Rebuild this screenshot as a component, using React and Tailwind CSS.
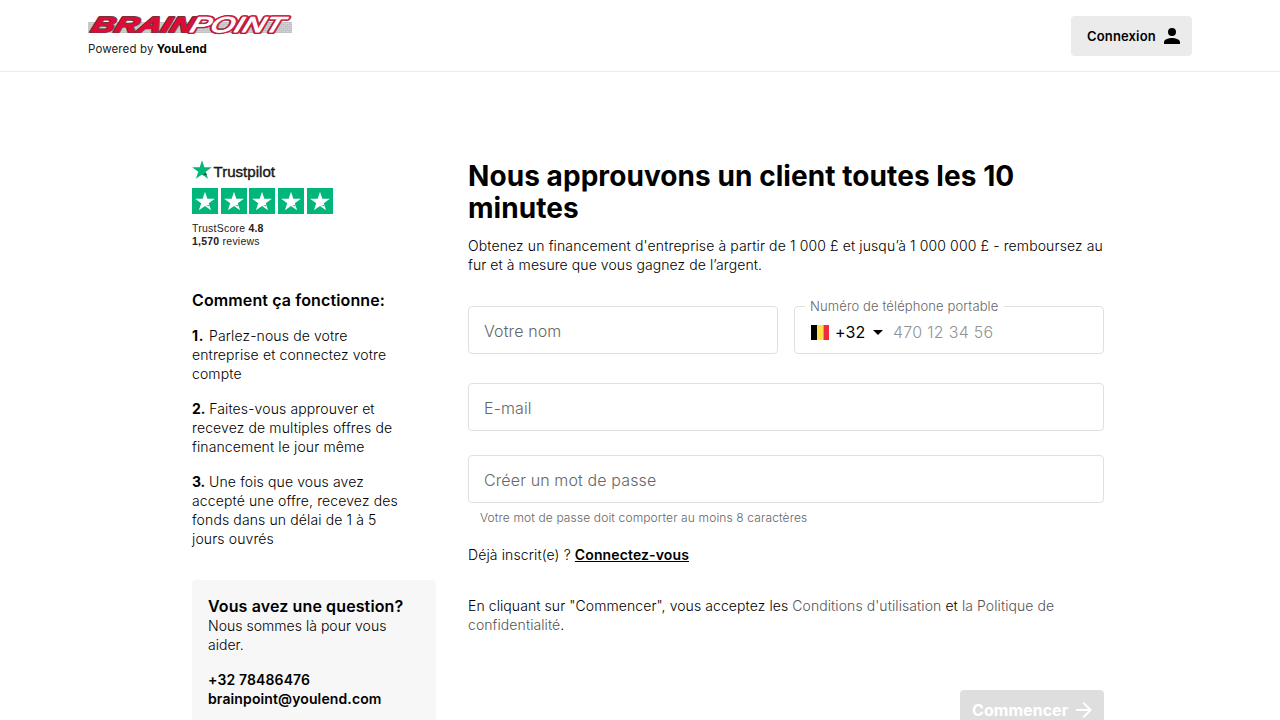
const STAR = "M12 1.2l2.55 7.85h8.25l-6.67 4.85 2.55 7.85L12 16.9l-6.68 4.85 2.55-7.85L1.2 9.05h8.25z";

function BrandLogo() {
  return (
    <svg width="204" height="22" viewBox="0 0 204 22" className="block overflow-visible">
      <defs>
        <pattern id="bricks" width="4" height="4" patternUnits="userSpaceOnUse">
          <rect width="4" height="4" fill="#d2d2d2" />
          <path d="M0 .5h4M1.500 0v2M3.500 2v2M0 2.500h4" stroke="#bababa" strokeWidth=".6" />
        </pattern>
      </defs>
      <rect y="8" width="204" height="11" fill="url(#bricks)" />
      <g
        transform="translate(0 18.200) skewX(-18)"
        fontFamily="Liberation Sans, Arial, sans-serif"
        fontWeight="700"
        fontStyle="italic"
        fontSize="21.500"
        strokeLinejoin="round"
        paintOrder="stroke"
      >
        <text x="2" y="0" textLength="102" lengthAdjust="spacingAndGlyphs" fill="#dc0c35" stroke="#5d3742" strokeWidth="2.200">BRAIN</text>
        <text x="2" y="0" textLength="102" lengthAdjust="spacingAndGlyphs" fill="#dc0c35" stroke="#dc0c35" strokeWidth=".9">BRAIN</text>
        <text x="101" y="0" textLength="93" lengthAdjust="spacingAndGlyphs" fontWeight="400" fill="#fff" stroke="#6d3042" strokeWidth="4">POINT</text>
        <text x="101" y="0" textLength="93" lengthAdjust="spacingAndGlyphs" fontWeight="400" fill="#fff" stroke="#d81a40" strokeWidth="3.200">POINT</text>
        <text x="101" y="0" textLength="93" lengthAdjust="spacingAndGlyphs" fontWeight="400" fill="#fff" stroke="#fff" strokeWidth=".9">POINT</text>
      </g>
    </svg>
  );
}

function Header() {
  return (
    <header className="flex h-[72px] items-start justify-between border-b border-[#ebebeb] px-[88px] pt-4">
      <div className="-mt-[2px]">
        <BrandLogo />
        <p className="mt-[5px] text-[11.500px] leading-4 font-normal whitespace-nowrap text-[#222]">
          Powered by <b className="font-bold text-black">YouLend</b>
        </p>
      </div>
      <button className="flex h-10 w-[121px] items-center rounded bg-[#ebebeb] pl-4 text-[13px] font-semibold tracking-[0.15px]">
        <span className="w-[73px] text-left">Connexion</span>
        <svg width="24" height="24" viewBox="0 0 24 24">
          <path d="M12 12a4 4 0 1 0 0-8 4 4 0 0 0 0 8zm0 2c-2.670 0-8 1.340-8 4v2h16v-2c0-2.660-5.330-4-8-4z" />
        </svg>
      </button>
    </header>
  );
}

function Trustpilot() {
  return (
    <div className="font-['Liberation_Sans',Arial,sans-serif] font-normal tracking-normal text-[#222]">
      <div className="flex h-[22px] items-start">
        <svg width="20" height="20" viewBox="1 1.500 22 21">
          <path d={STAR} fill="#00b67a" />
          <path d="M16.700 15.600l.6 1.900L12 16.900z" fill="#005128" />
        </svg>
        <svg width="64" height="22" className="block overflow-visible">
          <text x="1.500" y="17" fontSize="14.500" textLength="61.500" lengthAdjust="spacingAndGlyphs" fill="#191919" stroke="#191919" strokeWidth=".4">Trustpilot</text>
        </svg>
      </div>
      <div className="mt-[6px] flex gap-[2.700px]">
        {[0, 1, 2, 3, 4].map((i) => (
          <span key={i} className="flex h-[26px] w-[26px] items-center justify-center bg-[#00b67a]">
            <svg width="20" height="20" viewBox="1 .5 22 22">
              <path d={STAR} fill="#fff" />
              <path d="M12.800 17.100l3.600-1.300.5 1.500z" fill="#00b67a" />
            </svg>
          </span>
        ))}
      </div>
      <p className="mt-2 text-[10.500px] leading-[13px] tracking-[0.230px]">
        TrustScore <b className="font-bold">4.8</b>
        <br />
        <b className="font-bold">1,570</b> reviews
      </p>
    </div>
  );
}

function Step({ number, children }) {
  return (
    <p>
      <b className={number === 1 ? "mr-[1px] font-bold tracking-[0.6px]" : "font-bold tracking-[-0.2px]"}>{number}.</b> {children}
    </p>
  );
}

function Sidebar() {
  return (
    <aside className="w-[244px] shrink-0">
      <Trustpilot />
      <h2 className="mt-[42px] text-[16px] leading-5 font-semibold">Comment ça fonctionne:</h2>
      <div className="mt-4 flex flex-col gap-4 whitespace-nowrap">
        <Step number={1}>Parlez-nous de votre<br />entreprise et connectez votre<br />compte</Step>
        <Step number={2}>Faites-vous approuver et<br />recevez de multiples offres de<br />financement le jour même</Step>
        <Step number={3}>Une fois que vous avez<br />accepté une offre, recevez des<br />fonds dans un délai de 1 à 5<br />jours ouvrés</Step>
      </div>
      <div className="mt-8 h-[160px] rounded bg-[#f7f7f7] p-4">
        <h2 className="text-[16px] leading-5 font-semibold">Vous avez une question?</h2>
        <p className="tracking-[0.030px]">Nous sommes là pour vous<br />aider.</p>
        <p className="mt-4 font-semibold">+32 78486476<br />brainpoint@youlend.com</p>
      </div>
    </aside>
  );
}

function Field({ label }) {
  return (
    <div className="flex h-12 items-center rounded border border-[#e0e0e0] px-[15px] pt-[2px] text-[16px] text-[#666]">{label}</div>
  );
}

function PhoneField() {
  return (
    <div className="relative flex h-12 items-center rounded border border-[#e0e0e0] pt-1 pl-4 text-[16px]">
      <span className="absolute -top-[9px] left-[10px] bg-white px-[5px] pr-[6px] text-[13px] leading-4 tracking-[0.120px] whitespace-nowrap text-[#666]">Numéro de téléphone portable</span>
      <svg width="18" height="15" className="block">
        <path d="M0 0h6v15H0z" />
        <path d="M6 0h6.500v15H6z" fill="#fde047" />
        <path d="M12.500 0H18v15h-5.500z" fill="#ef2d3c" />
      </svg>
      <span className="ml-[6px] w-[38px] font-normal">+32</span>
      <svg width="10" height="5" className="block"><path d="M0 0h10L5 5z" /></svg>
      <span className="ml-[10px] tracking-[0.280px] text-[#939393]">470 12 34 56</span>
    </div>
  );
}

function SignupForm() {
  return (
    <section className="w-[636px] shrink-0 whitespace-nowrap">
      <h1 className="text-[28px] leading-8 font-bold tracking-[0.070px]">Nous approuvons un client toutes les 10<br />minutes</h1>
      <p className="mt-3">Obtenez un financement d'entreprise à partir de 1 000 £ et jusqu’à 1 000 000 £ - remboursez au<br /><span className="tracking-[0.080px]">fur et à mesure que vous gagnez de l’argent.</span></p>
      <div className="mt-8 grid grid-cols-2 gap-4">
        <Field label="Votre nom" />
        <PhoneField />
      </div>
      <div className="mt-[29px]"><Field label="E-mail" /></div>
      <div className="mt-6"><Field label="Créer un mot de passe" /></div>
      <p className="mt-[7px] ml-3 text-[12px] leading-4 tracking-[0.130px] text-[#666]">Votre mot de passe doit comporter au moins 8 caractères</p>
      <p className="mt-[19px]">Déjà inscrit(e) ? <a className="font-semibold underline">Connectez-vous</a></p>
      <p className="mt-8 tracking-[0.080px]">
        En cliquant sur "Commencer", vous acceptez les <a className="text-[#555]">Conditions d'utilisation</a> et <a className="text-[#555]">la Politique de<br />confidentialité</a>.
      </p>
      <div className="mt-14 flex justify-end">
        <button className="flex h-10 w-36 items-center rounded bg-[#dedede] pl-3 text-[16px] font-bold tracking-[0.050px] text-white">
          <span className="w-[100px] text-left">Commencer</span>
          <svg width="24" height="24" viewBox="0 0 24 24" fill="#fff">
            <path d="M12 4l-1.410 1.410L16.170 11H4v2h12.170l-5.580 5.590L12 20l8-8z" />
          </svg>
        </button>
      </div>
    </section>
  );
}

export default function App() {
  return (
    <div className="h-[720px] overflow-hidden bg-white font-['Inter',sans-serif] text-[14px] leading-[19px] font-light tracking-[0.120px] text-black">
      <Header />
      <main className="flex gap-8 pt-[88px] pl-[192px]">
        <Sidebar />
        <SignupForm />
      </main>
    </div>
  );
}
